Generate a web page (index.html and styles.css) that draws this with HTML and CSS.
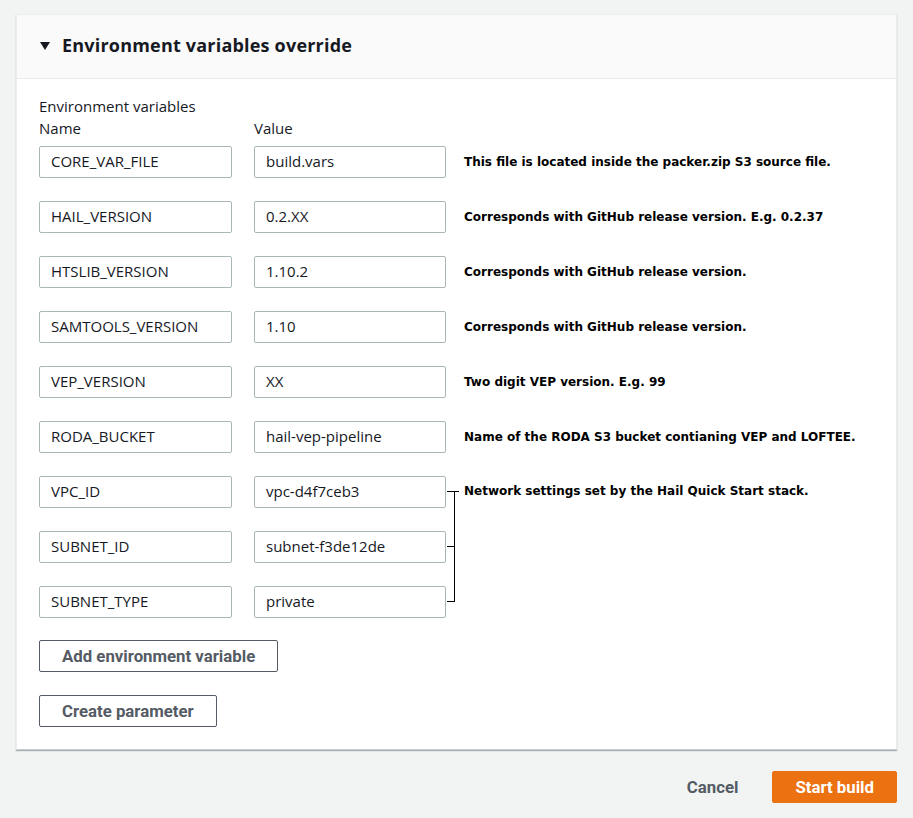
FILE: index.html
```html
<!DOCTYPE html>
<html>
<head>
<meta charset="utf-8">
<link rel="stylesheet" href="styles.css">
</head>
<body>
<div class="page">
  <section class="panel">
    <header class="panel-head">
      <span class="caret"></span>
      <h2 class="title">Environment variables override</h2>
    </header>
    <div class="panel-body">
      <div class="label">Environment variables</div>
      <div class="colheads">
        <div class="colhead">Name</div>
        <div class="colhead">Value</div>
      </div>
      <div class="grid">
        <div class="input">CORE_VAR_FILE</div>
        <div class="input">build.vars</div>
        <div class="note">This file is located inside the packer.zip S3 source file.</div>

        <div class="input">HAIL_VERSION</div>
        <div class="input">0.2.XX</div>
        <div class="note">Corresponds with GitHub release version. E.g. 0.2.37</div>

        <div class="input">HTSLIB_VERSION</div>
        <div class="input">1.10.2</div>
        <div class="note">Corresponds with GitHub release version.</div>

        <div class="input">SAMTOOLS_VERSION</div>
        <div class="input">1.10</div>
        <div class="note">Corresponds with GitHub release version.</div>

        <div class="input">VEP_VERSION</div>
        <div class="input">XX</div>
        <div class="note">Two digit VEP version. E.g. 99</div>

        <div class="input">RODA_BUCKET</div>
        <div class="input">hail-vep-pipeline</div>
        <div class="note">Name of the RODA S3 bucket contianing VEP and LOFTEE.</div>

        <div class="input">VPC_ID</div>
        <div class="input">vpc-d4f7ceb3</div>
        <div class="bracket-cell">
          <svg class="bracket" width="16" height="112" viewBox="0 0 16 112">
            <path d="M0 0.5H12M7.5 0V111M0 55.5H7.5M0 110.5H8" stroke="#000" stroke-width="1" fill="none"/>
          </svg>
          <div class="note bracket-note">Network settings set by the Hail Quick Start stack.</div>
        </div>

        <div class="input">SUBNET_ID</div>
        <div class="input">subnet-f3de12de</div>

        <div class="input">SUBNET_TYPE</div>
        <div class="input">private</div>
      </div>
      <div class="actions">
        <button class="btn">Add environment variable</button>
        <button class="btn">Create parameter</button>
      </div>
    </div>
  </section>
  <footer class="footer">
    <button class="link-btn">Cancel</button>
    <button class="primary">Start build</button>
  </footer>
</div>
</body>
</html>
```
FILE: styles.css
```css
html, body {
  margin: 0;
  padding: 0;
  background: #f2f3f3;
}
body {
  font-family: "Open Sans", "Noto Sans", sans-serif;
  color: #16191f;
  font-size: 15px;
}
.page {
  padding: 14px 16px 0 16px;
}
.panel {
  background: #fff;
  border: 1px solid #eaeded;
  border-bottom: 1px solid #c6cccd;
  box-shadow: 0 1px 1px rgba(0, 28, 36, 0.3);
}
.panel-head {
  display: flex;
  align-items: center;
  background: #fafafa;
  border-bottom: 1px solid #eaeded;
  padding-left: 23px;
  padding-bottom: 3px;
  box-sizing: border-box;
  height: 64px;
}
.caret {
  width: 0;
  height: 0;
  border-left: 5px solid transparent;
  border-right: 5px solid transparent;
  border-top: 8px solid #16191f;
  margin-right: 12px;
  margin-top: 1px;
}
.title {
  margin: 0;
  font-size: 18px;
  font-weight: 700;
  line-height: 24px;
  letter-spacing: 0.2px;
}
.panel-body {
  padding: 16px 22px 22px 22px;
}
.label {
  line-height: 22px;
}
.colheads {
  display: flex;
  gap: 22px;
  margin-bottom: 7px;
}
.colhead {
  line-height: 22px;
  width: 193px;
}
.grid {
  display: grid;
  grid-template-columns: 193px 192px 1fr;
  grid-auto-rows: 32px;
  column-gap: 22px;
  row-gap: 23px;
}
.input {
  box-sizing: border-box;
  border: 1px solid #aab7b8;
  border-radius: 2px;
  padding: 0 12px 0 11px;
  line-height: 29px;
  height: 32px;
  white-space: nowrap;
}
.note {
  font-family: "DejaVu Sans", sans-serif;
  font-weight: 700;
  font-size: 12px;
  line-height: 32px;
  margin-left: -4px;
  white-space: nowrap;
  color: #000;
}
.bracket-cell {
  grid-row: span 3;
  display: flex;
  align-items: flex-start;
  margin-left: -21px;
  padding-top: 15px;
}
.bracket {
  flex: none;
  display: block;
}
.bracket-note {
  margin-left: 1px;
  line-height: 16px;
  margin-top: -8px;
}
.actions {
  display: flex;
  flex-direction: column;
  align-items: flex-start;
  gap: 23px;
  margin-top: 22px;
}
.btn {
  font-family: "Liberation Sans Narrow", "Roboto", sans-serif;
  font-weight: 700;
  font-size: 16.8px;
  color: #545b64;
  background: #fff;
  border: 1px solid #545b64;
  border-radius: 2px;
  height: 32px;
  padding: 0 22px;
  cursor: pointer;
}
.footer {
  display: flex;
  justify-content: flex-end;
  align-items: center;
  gap: 14px;
  padding-top: 21px;
}
.link-btn {
  font-family: "Liberation Sans Narrow", "Roboto", sans-serif;
  font-weight: 700;
  font-size: 16.8px;
  color: #545b64;
  background: none;
  border: none;
  padding: 0 20px;
  height: 32px;
}
.primary {
  font-family: "Liberation Sans Narrow", "Roboto", sans-serif;
  font-weight: 700;
  font-size: 16.8px;
  color: #fff;
  background: #ec7211;
  border: 1px solid #ec7211;
  border-radius: 2px;
  height: 32px;
  padding: 0 22px;
}
```
